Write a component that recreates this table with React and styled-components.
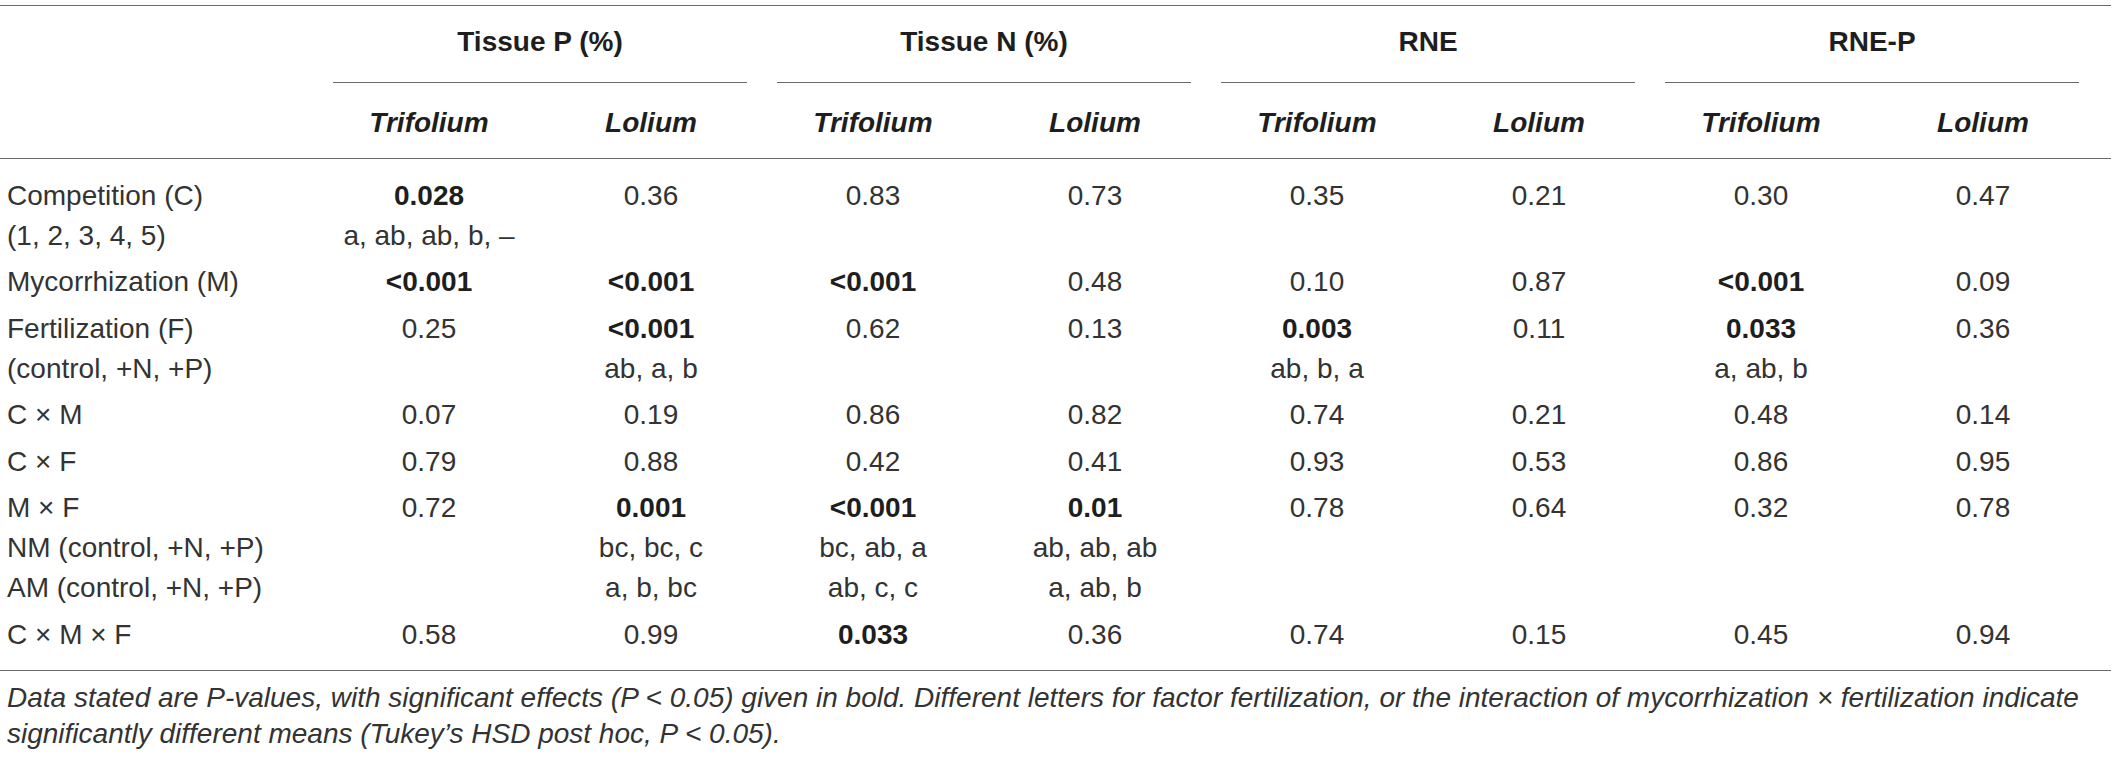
import React from "react";
import styled, { createGlobalStyle } from "styled-components";

const GlobalStyle = createGlobalStyle`
  html, body {
    margin: 0;
    padding: 0;
    background: #ffffff;
  }
  body {
    font-family: "Liberation Sans", Arial, Helvetica, sans-serif;
    color: #333333;
  }
`;

const RULE = "1px solid #6a6a6a";
const COLS = "318px repeat(8, 222px)";

const Page = styled.div`
  width: 2118px;
  padding-top: 5px;
  box-sizing: border-box;
`;

const Table = styled.div`
  width: 2111px;
  font-size: 28px;
  line-height: 40px;
`;

const Head = styled.div`
  display: grid;
  grid-template-columns: ${COLS};
  padding-right: 17px;
  border-top: ${RULE};
  border-bottom: ${RULE};
`;

const Corner = styled.div``;

const GroupCell = styled.div`
  grid-column: span 2;
  margin: 0 15px 0 15px;
  padding: 16.3px 0 19.7px;
  border-bottom: ${RULE};
  text-align: center;
  font-weight: 700;
  color: #1e1e1e;
`;

const SubCell = styled.div`
  padding: 20.3px 0 14.7px;
  text-align: center;
  font-weight: 700;
  font-style: italic;
  color: #1e1e1e;
`;

const Body = styled.div`
  display: grid;
  grid-template-columns: ${COLS};
  padding: 14px 17px 12px 0;
  border-bottom: ${RULE};
`;

const Cell = styled.div`
  padding: 3px 0 3.5px ${(p) => (p.$label ? "7px" : "0")};
  text-align: ${(p) => (p.$label ? "left" : "center")};
  white-space: nowrap;
`;

const Line = styled.span`
  display: block;
  font-weight: ${(p) => (p.$bold ? 700 : 400)};
  color: ${(p) => (p.$bold ? "#1e1e1e" : "#333333")};
`;

const Footnote = styled.p`
  margin: 0;
  padding: 9px 0 0 7px;
  font-size: 28px;
  line-height: 36px;
  font-style: italic;
  color: #333333;
  white-space: nowrap;
`;

const groups = ["Tissue P (%)", "Tissue N (%)", "RNE", "RNE-P"];
const species = ["Trifolium", "Lolium"];

const B = (t) => ({ b: true, t });

const rows = [
  {
    label: ["Competition (C)", "(1, 2, 3, 4, 5)"],
    values: [
      [B("0.028"), "a, ab, ab, b, –"],
      "0.36",
      "0.83",
      "0.73",
      "0.35",
      "0.21",
      "0.30",
      "0.47",
    ],
  },
  {
    label: ["Mycorrhization (M)"],
    values: [B("<0.001"), B("<0.001"), B("<0.001"), "0.48", "0.10", "0.87", B("<0.001"), "0.09"],
  },
  {
    label: ["Fertilization (F)", "(control, +N, +P)"],
    values: [
      "0.25",
      [B("<0.001"), "ab, a, b"],
      "0.62",
      "0.13",
      [B("0.003"), "ab, b, a"],
      "0.11",
      [B("0.033"), "a, ab, b"],
      "0.36",
    ],
  },
  {
    label: ["C × M"],
    values: ["0.07", "0.19", "0.86", "0.82", "0.74", "0.21", "0.48", "0.14"],
  },
  {
    label: ["C × F"],
    values: ["0.79", "0.88", "0.42", "0.41", "0.93", "0.53", "0.86", "0.95"],
  },
  {
    label: ["M × F", "NM (control, +N, +P)", "AM (control, +N, +P)"],
    values: [
      "0.72",
      [B("0.001"), "bc, bc, c", "a, b, bc"],
      [B("<0.001"), "bc, ab, a", "ab, c, c"],
      [B("0.01"), "ab, ab, ab", "a, ab, b"],
      "0.78",
      "0.64",
      "0.32",
      "0.78",
    ],
  },
  {
    label: ["C × M × F"],
    values: ["0.58", "0.99", B("0.033"), "0.36", "0.74", "0.15", "0.45", "0.94"],
  },
];

function renderLines(v) {
  const list = Array.isArray(v) ? v : [v];
  return list.map((item, i) =>
    typeof item === "string" ? (
      <Line key={i}>{item}</Line>
    ) : (
      <Line key={i} $bold>
        {item.t}
      </Line>
    )
  );
}

export default function App() {
  return (
    <>
      <GlobalStyle />
      <Page>
        <Table>
          <Head>
            <Corner />
            {groups.map((g) => (
              <GroupCell key={g}>{g}</GroupCell>
            ))}
            <Corner />
            {groups.map((g) =>
              species.map((s) => <SubCell key={g + s}>{s}</SubCell>)
            )}
          </Head>
          <Body>
            {rows.map((r, ri) => (
              <React.Fragment key={ri}>
                <Cell $label>{renderLines(r.label)}</Cell>
                {r.values.map((v, ci) => (
                  <Cell key={ci}>{renderLines(v)}</Cell>
                ))}
              </React.Fragment>
            ))}
          </Body>
        </Table>
        <Footnote>
          Data stated are P-values, with significant effects (P &lt; 0.05) given in bold. Different letters for factor fertilization, or the interaction of mycorrhization × fertilization indicate
          <br />
          significantly different means (Tukey’s HSD post hoc, P &lt; 0.05).
        </Footnote>
      </Page>
    </>
  );
}
